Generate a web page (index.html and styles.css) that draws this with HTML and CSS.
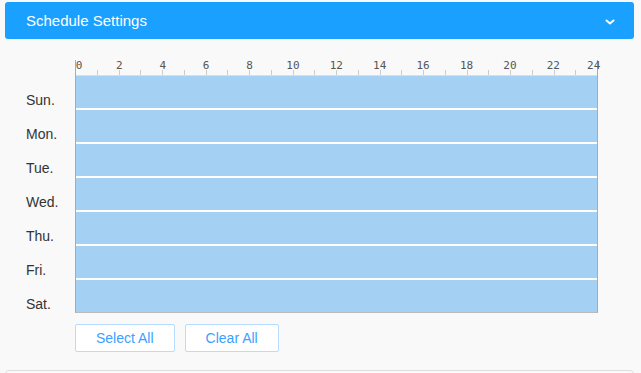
FILE: index.html
```html
<!DOCTYPE html>
<html lang="en">
<head>
  <meta charset="UTF-8" />
  <title>Schedule Settings</title>
  <link rel="stylesheet" href="styles.css">
</head>
<body>
  <div class="panel-header">
    <span class="panel-title">Schedule Settings</span>
    <svg class="chevron" width="10" height="6" viewBox="0 0 10 6">
      <path d="M1.5 1.5 L5 4.5 L8.5 1.5" fill="none" stroke="#fff" stroke-width="2" stroke-linecap="round" stroke-linejoin="round"/>
    </svg>
  </div>

  <div class="schedule">
    <div class="days">
      <div class="day">Sun.</div>
      <div class="day">Mon.</div>
      <div class="day">Tue.</div>
      <div class="day">Wed.</div>
      <div class="day">Thu.</div>
      <div class="day">Fri.</div>
      <div class="day">Sat.</div>
    </div>

    <div class="timeline">
      <div class="ruler">
        <div class="ruler-labels">
          <span class="first">0</span><span>2</span><span>4</span><span>6</span><span>8</span><span>10</span><span>12</span><span>14</span><span>16</span><span>18</span><span>20</span><span>22</span><span class="last">24</span>
        </div>
        <div class="ticks">
          <i></i><i></i><i></i><i></i><i></i><i></i><i></i><i></i><i></i><i></i><i></i><i></i>
          <i></i><i></i><i></i><i></i><i></i><i></i><i></i><i></i><i></i><i></i><i></i><i></i>
        </div>
      </div>
      <div class="rows">
        <div class="row"></div>
        <div class="row"></div>
        <div class="row"></div>
        <div class="row"></div>
        <div class="row"></div>
        <div class="row"></div>
        <div class="row"></div>
      </div>
    </div>
  </div>

  <div class="actions">
    <button class="btn">Select All</button>
    <button class="btn">Clear All</button>
  </div>

  <div class="next-panel"></div>
</body>
</html>
```

FILE: styles.css
```css
body {
  margin: 0;
  padding: 2px 0 0 5px;
  background-color: #f9f9f9;
  font-family: "Liberation Sans", Arial, sans-serif;
  color: #333;
  overflow: hidden;
}

.panel-header {
  width: 629px;
  height: 37px;
  box-sizing: border-box;
  background-color: #1aa0ff;
  border-radius: 3px;
  display: flex;
  align-items: center;
  justify-content: space-between;
  padding: 0 19px 0 21px;
}

.panel-title {
  color: #fff;
  font-size: 15px;
}

.chevron {
  display: block;
  margin-top: 2px;
}

.schedule {
  display: flex;
  align-items: flex-start;
  margin-top: 21px;
  padding-left: 21px;
}

.days {
  width: 49px;
  padding-top: 23px;
  margin-bottom: -7px;
}

.day {
  height: 34px;
  line-height: 34px;
  font-size: 14px;
  color: #333;
}

.timeline {
  width: 521px;
  border-left: 1px solid #aaa;
  border-right: 1px solid #aaa;
  border-bottom: 1px solid #bbb;
}

.ruler {
  height: 16px;
  position: relative;
  border-bottom: 1px solid #ddd;
  box-sizing: border-box;
}

.ruler-labels {
  display: flex;
  margin-left: -21.7px;
  font-family: "DejaVu Sans Mono", monospace;
  font-size: 11px;
  line-height: 11px;
  color: #555;
}

.ruler-labels span {
  flex: 0 0 43.4px;
  text-align: center;
}

.ruler-labels .first {
  text-indent: 6px;
}

.ruler-labels .last {
  text-indent: -6px;
}

.ticks {
  display: flex;
  height: 5px;
  position: absolute;
  left: 0;
  right: 0;
  bottom: 0;
}

.ticks i {
  flex: 1;
  border-left: 1px solid #ccc;
}

.ticks i:first-child {
  border-left: none;
}

.rows {
  display: flex;
  flex-direction: column;
  gap: 2px;
  background-color: #fff;
}

.row {
  height: 32px;
  background-color: #a3d0f3;
}

.actions {
  display: flex;
  gap: 10px;
  margin: 10px 0 0 70px;
}

.btn {
  height: 28px;
  padding: 0 20px;
  white-space: nowrap;
  background-color: #fff;
  border: 1px solid #b7dcff;
  border-radius: 2px;
  color: #3ca0ff;
  font-family: "Liberation Sans", Arial, sans-serif;
  font-size: 14px;
  cursor: pointer;
}

.next-panel {
  width: 629px;
  height: 20px;
  margin-top: 18px;
  box-sizing: border-box;
  border: 1px solid #ddd;
  border-radius: 4px;
  background-color: #fafafa;
}
```
